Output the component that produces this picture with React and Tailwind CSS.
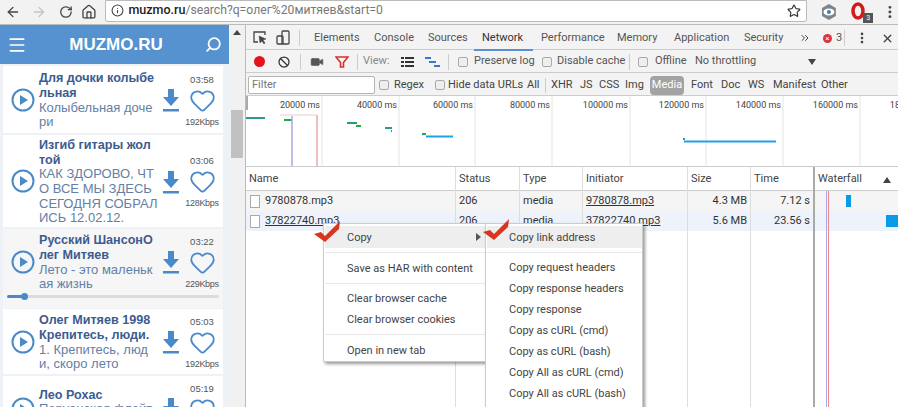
import { ArrowLeft, ArrowRight, RotateCw, Home, Info, Star, EllipsisVertical, X, Search, Menu, Heart, Video, Ban, ChevronsRight } from "lucide-react";

const tracks = [
  { title: ["Для дочки колыбе", "льная"], desc: ["Колыбельная доче", "ри"], time: "03:58", rate: "192Kbps", h: "h-[67px]" },
  { title: ["Изгиб гитары жол", "той"], desc: ["КАК ЗДОРОВО, ЧТ", "О ВСЕ МЫ ЗДЕСЬ", "СЕГОДНЯ СОБРАЛ", "ИСЬ 12.02.12."], time: "03:06", rate: "128Kbps", h: "h-[92px]" },
  { title: ["Русский ШансонО", "лег Митяев"], desc: ["Лето - это маленьк", "ая жизнь"], time: "03:22", rate: "229Kbps", h: "h-[79px]", active: true },
  { title: ["Олег Митяев 1998", "Крепитесь, люди."], desc: ["1. Крепитесь, люд", "и, скоро лето"], time: "05:03", rate: "192Kbps", h: "h-[65px]" },
  { title: ["Лео Рохас"], desc: ["Перуанская флейт", "а"], time: "05:19", rate: "192Kbps", h: "h-[65px]" },
];

const tabs = [
  ["Elements", "w-[60px]"],
  ["Console", "w-[54px]"],
  ["Sources", "w-[54px]"],
  ["Network", "w-[59px]"],
  ["Performance", "w-[76px]"],
  ["Memory", "w-[57px]"],
  ["Application", "w-[70px]"],
  ["Security", "w-[53px]"],
];

const types = [
  ["All", "w-[19px]"],
  ["XHR", "w-[29px]"],
  ["JS", "w-[19px]"],
  ["CSS", "w-[26px]"],
  ["Img", "w-[25px]"],
  ["Media", "w-[34px]"],
  ["Font", "w-[30px]"],
  ["Doc", "w-[27px]"],
  ["WS", "w-[25px]"],
  ["Manifest", "w-[48px]"],
  ["Other", "w-[40px]"],
];

const columns = [
  { name: "Name", w: "w-[210px]", cells: ["9780878.mp3", "37822740.mp3"] },
  { name: "Status", w: "w-[64px]", cells: ["206", "206"] },
  { name: "Type", w: "w-[63px]", cells: ["media", "media"] },
  { name: "Initiator", w: "w-[105px]", cells: ["9780878.mp3", "37822740.mp3"] },
  { name: "Size", w: "w-[63px]", cells: ["4.3 MB", "5.6 MB"], right: true },
  { name: "Time", w: "w-[63px]", cells: ["7.12 s", "23.56 s"], right: true },
];

const ticks = [
  [322, "20000"], [399, "40000"], [475, "60000"], [552, "80000"],
  [630, "100000"], [706, "120000"], [783, "140000"], [860, "160000"], [937, "180000"],
];

function PlayIcon() {
  return (
    <svg width="24" height="24" viewBox="0 0 24 24" className="shrink-0">
      <circle cx="12" cy="12" r="10.5" fill="none" stroke="#4a8ac9" strokeWidth="2" />
      <path d="M9 7l8 5-8 5z" fill="#4a8ac9" />
    </svg>
  );
}

function DownloadIcon() {
  return (
    <svg width="18" height="25" viewBox="0 0 18 25" className="shrink-0">
      <path d="M6 1h6v8h5l-8 9-8-9h5z" fill="#4a8ac9" />
      <rect x="1" y="21" width="16" height="2.5" fill="#4a8ac9" />
    </svg>
  );
}

function Track({ t }) {
  return (
    <div className={`${t.h} relative flex items-center mb-[2px] pl-[8px] ${t.active ? "bg-[#f6f6f6] mb-px" : "bg-white"}`}>
      <div className={t.active ? "mb-[14px]" : ""}>
        <PlayIcon />
      </div>
      <div className={`w-[118px] ml-[4px] mt-[2px] text-[13px] leading-[14.6px] whitespace-nowrap ${t.active ? "mb-[14px]" : ""}`}>
        {t.title.map((l) => (
          <div key={l} className="font-bold text-[12.6px] text-[#3d5c8f]">{l}</div>
        ))}
        {t.desc.map((l) => (
          <div key={l} className="text-[#6480a6]">{l}</div>
        ))}
      </div>
      <div className={`ml-[5px] mt-[2px] ${t.active ? "mb-[14px]" : ""}`}>
        <DownloadIcon />
      </div>
      <div className={`ml-[8px] w-[28px] flex flex-col items-center ${t.active ? "mb-[14px]" : ""}`}>
        <div className="text-[9.5px] leading-[12px] mt-[2px] text-[#555]">{t.time}</div>
        <Heart size={27} strokeWidth={1.6} className="text-[#4a8ac9] my-[1px]" />
        <div className="text-[9px] leading-[12px] mt-px text-[#555] tracking-[-0.3px] whitespace-nowrap">{t.rate}</div>
      </div>
      {t.active && (
        <div className="absolute left-[4px] right-[4px] bottom-[10px] h-[3px] rounded-full bg-[#d9dde2]">
          <div className="w-[17px] h-[3px] rounded-full bg-[#4a8ac9]" />
          <div className="absolute left-[14px] top-[-2px] w-[7px] h-[7px] rounded-full bg-[#4a8ac9]" />
        </div>
      )}
    </div>
  );
}

function Checkbox({ className }) {
  return <span className={`w-[10px] h-[10px] shrink-0 rounded-[2px] border border-[#aaa] bg-[#eee] ${className || ""}`} />;
}

function Divider({ className }) {
  return <span className={`w-px h-[16px] shrink-0 bg-[#ccc] ${className || ""}`} />;
}

function RedCheck({ className }) {
  return (
    <svg width="28" height="24" viewBox="0 0 28 24" className={`absolute ${className}`}>
      <path d="M0 13l7-2 4 4L26 0l-1 8-14 13z" fill="#d8371f" />
    </svg>
  );
}

function MenuItem({ children, h, arrow }) {
  return (
    <div className={`${h || "h-[21px]"} flex items-center justify-between pr-[4px]`}>
      <span className="whitespace-nowrap pt-[2px]">{children}</span>
      {arrow && <span className="w-0 h-0 border-y-[4px] border-y-transparent border-l-[5px] border-l-[#555]" />}
    </div>
  );
}

function MenuSeparator() {
  return (
    <div className="h-[9px] -ml-[22px] flex items-center">
      <span className="w-full h-px bg-[#e8e8e8]" />
    </div>
  );
}

export default function App() {
  return (
    <div className="relative w-[898px] h-[407px] overflow-hidden bg-white font-['Roboto',sans-serif] text-[11px] text-[#333]">
      {/* browser bar */}
      <div className="h-[25px] flex items-center bg-[#f2f2f2] border-b border-[#bbb]">
        <ArrowLeft size={16} strokeWidth={2} className="ml-[5px] text-[#444]" />
        <ArrowRight size={16} strokeWidth={2} className="ml-[10px] text-[#c4c4c4]" />
        <RotateCw size={14} strokeWidth={2.2} className="ml-[12px] text-[#444]" />
        <Home size={16} strokeWidth={2} className="ml-[8px] text-[#444]" />
        <div className="ml-[9px] w-[708px] h-[22px] mb-[3px] flex items-center bg-white border border-[#bbb] rounded-b-[3px]">
          <Info size={13} className="ml-[5px] text-[#444]" />
          <span className="ml-[4px] font-medium text-[12.5px] text-[#222]">muzmo.ru</span>
          <span className="text-[12.2px] text-[#777]">/search?q=олег%20митяев&start=0</span>
          <Star size={14} strokeWidth={2} className="ml-auto mr-[5px] text-[#333]" />
        </div>
        <svg width="18" height="18" viewBox="0 0 18 18" className="ml-[13px]">
          <path d="M9 1l7 4v8l-7 4-7-4V5z" fill="#7d868c" />
          <ellipse cx="9" cy="9" rx="5.5" ry="3.5" fill="#fff" />
          <circle cx="9" cy="9" r="2" fill="#3f7fb5" />
        </svg>
        <div className="relative ml-[13px] w-[20px] h-[22px]">
          <svg width="16" height="18" viewBox="0 0 16 18" className="absolute left-0 top-[1px]">
            <ellipse cx="7" cy="9" rx="5" ry="7" fill="none" stroke="#d11a1a" strokeWidth="3.5" />
          </svg>
          <span className="absolute right-[-2px] bottom-0 w-[10px] h-[10px] bg-[#555] text-white text-[7px] leading-[10px] text-center">3</span>
        </div>
        <EllipsisVertical size={16} strokeWidth={2.5} className="ml-[11px] text-[#444]" />
      </div>

      <div className="flex h-[382px]">
        {/* site panel */}
        <div className="w-[229px] shrink-0 bg-[#eef1f5] font-['Liberation_Sans',sans-serif]">
          <div className="h-[39px] flex items-center justify-between px-[7px] bg-[#5592cf] text-white">
            <Menu size={20} strokeWidth={2} />
            <span className="text-[17px] font-bold">MUZMO.RU</span>
            <Search size={17} strokeWidth={2.5} className="-scale-x-100" />
          </div>
          <div className="pt-[2px] px-[3px] pr-[6px] overflow-hidden">
            {tracks.map((t) => (
              <Track key={t.rate + t.time} t={t} />
            ))}
          </div>
        </div>

        {/* page scrollbar */}
        <div className="w-[16px] shrink-0 bg-[#f1f1f1] pt-[5px] px-[2px]">
          <div className="mx-auto w-0 h-0 border-x-[4px] border-x-transparent border-b-[5px] border-b-[#444]" />
          <div className="mt-[75px] h-[48px] bg-[#c1c1c1]" />
        </div>

        {/* devtools */}
        <div className="flex-1 min-w-0 flex flex-col border-l border-[#bbb]">
          <div className="h-[25px] shrink-0 flex items-center pt-[2px] bg-[#f3f3f3] border-b border-[#ccc] text-[#555]">
            <svg width="16" height="16" viewBox="0 0 16 16" className="ml-[6px]" fill="none" stroke="#444" strokeWidth="1.3">
              <path d="M13 5V2H2v10h4" />
              <path d="M7 6l7 3-3 1 2 3-1 1-2-3-2 2z" fill="#444" strokeWidth="0.5" />
            </svg>
            <svg width="16" height="16" viewBox="0 0 16 16" className="ml-[7px]" fill="none" stroke="#444" strokeWidth="1.3">
              <rect x="7" y="1" width="7" height="13" rx="1" />
              <rect x="2" y="6" width="6" height="8" rx="1" />
            </svg>
            <Divider className="ml-[8px]" />
            <div className="ml-[14px] flex">
              {tabs.map(([name, w]) => (
                <span key={name} className={`${w} relative whitespace-nowrap ${name === "Network" ? "text-[#333]" : ""}`}>
                  {name}
                  {name === "Network" && <span className="absolute left-[-8px] right-[8px] top-[19px] h-[2px] bg-[#5a8fd0]" />}
                </span>
              ))}
            </div>
            <ChevronsRight size={12} strokeWidth={2} className="ml-[2px] text-[#444]" />
            <span className="ml-[12px] w-[9px] h-[9px] rounded-full bg-[#d9353c] text-white text-[8px] leading-[9px] text-center">×</span>
            <span className="ml-[4px]">3</span>
            <Divider className="ml-[2px]" />
            <EllipsisVertical size={14} strokeWidth={2.5} className="ml-[10px] text-[#444]" />
            <X size={13} strokeWidth={2.5} className="ml-[12px] text-[#444]" />
          </div>

          <div className="h-[23px] shrink-0 flex items-center pt-px bg-[#f3f3f3] border-b border-[#ccc] text-[#555]">
            <span className="ml-[8px] w-[11px] h-[11px] rounded-full bg-[#e8101c]" />
            <Ban size={12} strokeWidth={2.5} className="ml-[13px] text-[#333]" />
            <Divider className="ml-[10px]" />
            <Video size={14} fill="#555" strokeWidth={1} className="ml-[9px] text-[#555]" />
            <svg width="14" height="14" viewBox="0 0 14 14" className="ml-[11px]" fill="none" stroke="#d8302a" strokeWidth="1.6">
              <path d="M1 2h12L8.5 7.5V12h-3V7.5z" />
            </svg>
            <Divider className="ml-[8px]" />
            <span className="ml-[5px] w-[32px] text-[#888]">View:</span>
            <svg width="13" height="10" viewBox="0 0 13 10" className="ml-[6px]" fill="#333">
              <path d="M0 0h3v2H0zM4 0h9v2H4zM0 4h3v2H0zM4 4h9v2H4zM0 8h3v2H0zM4 8h9v2H4z" />
            </svg>
            <svg width="15" height="10" viewBox="0 0 15 10" className="ml-[11px]" fill="#3b78c9">
              <path d="M0 0h6v2H0zM4 4h7v2H4zM9 8h6v2H9z" />
            </svg>
            <Divider className="ml-[8px]" />
            <Checkbox className="ml-[9px]" />
            <span className="ml-[6px] w-[68px] whitespace-nowrap">Preserve log</span>
            <Checkbox />
            <span className="ml-[5px] w-[72px] whitespace-nowrap">Disable cache</span>
            <Divider />
            <Checkbox className="ml-[8px]" />
            <span className="ml-[7px] w-[40px] whitespace-nowrap">Offline</span>
            <span className="w-[113px] whitespace-nowrap">No throttling</span>
            <span className="w-0 h-0 border-x-[4px] border-x-transparent border-t-[6px] border-t-[#444]" />
          </div>

          <div className="h-[23px] shrink-0 flex items-center pt-[2px] bg-[#f3f3f3] border-b border-[#ccc] text-[#444]">
            <div className="ml-[2px] w-[127px] h-[18px] flex items-center pl-[3px] bg-white border border-[#b5b5b5] rounded-[2px] text-[#777]">Filter</div>
            <Checkbox className="ml-[4px]" />
            <span className="ml-[5px] w-[41px]">Regex</span>
            <Checkbox />
            <span className="ml-[3px] w-[79px] whitespace-nowrap">Hide data URLs</span>
            {types.map(([name, w]) => (
              <span
                key={name}
                className={`${w} flex items-center whitespace-nowrap ${name === "Media" ? "h-[19px] justify-center rounded-[4px] bg-[#a3a3a3] text-white mr-[7px]" : ""} ${name === "All" ? "border-r border-[#ccc] mr-[5px] h-[15px]" : ""}`}
              >
                {name}
              </span>
            ))}
          </div>

          <div className="h-[71px] shrink-0 border-b border-[#ccc]">
            <svg width="652" height="70" viewBox="246 96 652 70" className="block">
              <rect x="246" y="96" width="2" height="14" fill="#aaa" />
              {ticks.map(([x, label]) => (
                <g key={x}>
                  <line x1={x} x2={x} y1="96" y2="167" stroke="#e4e4e4" />
                  <text x={x - 2} y="108" textAnchor="end" fontSize="9" fill="#444" fontFamily="Roboto, sans-serif">{label} ms</text>
                </g>
              ))}
              <line x1="245" x2="265" y1="118" y2="118" stroke="#2a9b8d" strokeWidth="2" />
              <line x1="280" x2="317" y1="115" y2="115" stroke="#eecccc" />
              <line x1="284" x2="292" y1="120" y2="120" stroke="#22aa44" strokeWidth="2" />
              <line x1="292" x2="292" y1="116" y2="167" stroke="#a8a8e8" strokeWidth="1.5" />
              <line x1="317" x2="317" y1="115" y2="167" stroke="#e8a8a8" strokeWidth="1.5" />
              <line x1="347" x2="357" y1="123" y2="123" stroke="#2a9b6d" strokeWidth="2" />
              <line x1="356" x2="361" y1="126" y2="126" stroke="#22aa44" strokeWidth="2" />
              <line x1="385" x2="392" y1="128" y2="128" stroke="#2a9b8d" strokeWidth="2" />
              <line x1="391" x2="392" y1="131" y2="131" stroke="#2a9b8d" strokeWidth="2" />
              <line x1="422" x2="426" y1="134" y2="134" stroke="#2a9b6d" strokeWidth="2" />
              <line x1="426" x2="453" y1="136.5" y2="136.5" stroke="#1da1e8" strokeWidth="2" />
              <line x1="684" x2="776" y1="141.5" y2="141.5" stroke="#1da1e8" strokeWidth="2" />
              <rect x="683" y="138" width="2" height="2" fill="#2a9b8d" />
            </svg>
          </div>

          {/* request table */}
          <div className="flex-1 flex min-h-0 text-[#333]">
            {columns.map((c, i) => (
              <div key={c.name} className={`${c.w} shrink-0 border-r border-[#ddd]`}>
                <div className="h-[24px] flex items-center px-[3px] pt-[2px] border-b border-[#ccc] text-[#444] bg-white">{c.name}</div>
                {c.cells.map((cell, r) => (
                  <div
                    key={r}
                    className={`h-[20px] flex items-center px-[3px] pt-px ${r === 0 ? "bg-[#f5f5f5]" : "bg-[#edf2fb]"} ${c.right ? "justify-end" : ""} ${c.name === "Initiator" ? "underline" : ""}`}
                  >
                    {i === 0 && <span className="w-[10px] h-[13px] mr-[5px] ml-[1px] border border-[#aaa] bg-white" />}
                    <span className={i === 0 && r === 1 ? "underline" : ""}>{cell}</span>
                  </div>
                ))}
              </div>
            ))}
            <div className="flex-1 relative border-l-2 border-[#aaa] -ml-px">
              <div className="h-[24px] flex items-center px-[3px] pt-[2px] border-b border-[#ccc] text-[#444]">
                Waterfall
                <span className="ml-auto mr-[6px] w-0 h-0 border-x-[4px] border-x-transparent border-b-[6px] border-b-[#444]" />
              </div>
              <div className="h-[20px] flex items-center pl-[31px] bg-[#f5f5f5]">
                <span className="w-[5px] h-[12px] bg-[#0a9be8]" />
              </div>
              <div className="h-[20px] flex items-center pl-[71px] bg-[#edf2fb]">
                <span className="w-[14px] h-[12px] bg-[#0a9be8]" />
              </div>
              <span className="absolute left-[11px] top-[24px] bottom-0 w-px bg-[#a8a8e8]" />
              <span className="absolute left-[13px] top-[24px] bottom-0 w-px bg-[#e88]" />
            </div>
          </div>
        </div>
      </div>

      {/* context menus */}
      <div className="absolute left-[323px] top-[223px] w-[163px] h-[139px] pt-[2px] pl-[23px] bg-white border border-[#ccc] shadow-[2px_2px_3px_rgba(0,0,0,0.4)] text-[#444]">
        <div className="-ml-[22px] pl-[22px] bg-[#eeeeee]"><MenuItem h="h-[22px]" arrow>Copy</MenuItem></div>
        <MenuSeparator />
        <MenuItem h="h-[22px]">Save as HAR with content</MenuItem>
        <MenuSeparator />
        <MenuItem>Clear browser cache</MenuItem>
        <MenuItem>Clear browser cookies</MenuItem>
        <MenuSeparator />
        <MenuItem h="h-[22px]">Open in new tab</MenuItem>
      </div>
      <div className="absolute left-[485px] top-[223px] w-[158px] h-[190px] pt-[2px] pl-[23px] bg-white border border-[#ccc] shadow-[2px_2px_3px_rgba(0,0,0,0.4)] text-[#444]">
        <div className="-ml-[22px] pl-[22px] bg-[#eeeeee]"><MenuItem h="h-[22px]">Copy link address</MenuItem></div>
        <MenuSeparator />
        <MenuItem>Copy request headers</MenuItem>
        <MenuItem>Copy response headers</MenuItem>
        <MenuItem>Copy response</MenuItem>
        <MenuItem>Copy as cURL (cmd)</MenuItem>
        <MenuItem>Copy as cURL (bash)</MenuItem>
        <MenuItem>Copy All as cURL (cmd)</MenuItem>
        <MenuItem>Copy All as cURL (bash)</MenuItem>
      </div>
      <RedCheck className="left-[314px] top-[221px]" />
      <RedCheck className="left-[483px] top-[219px]" />
    </div>
  );
}
